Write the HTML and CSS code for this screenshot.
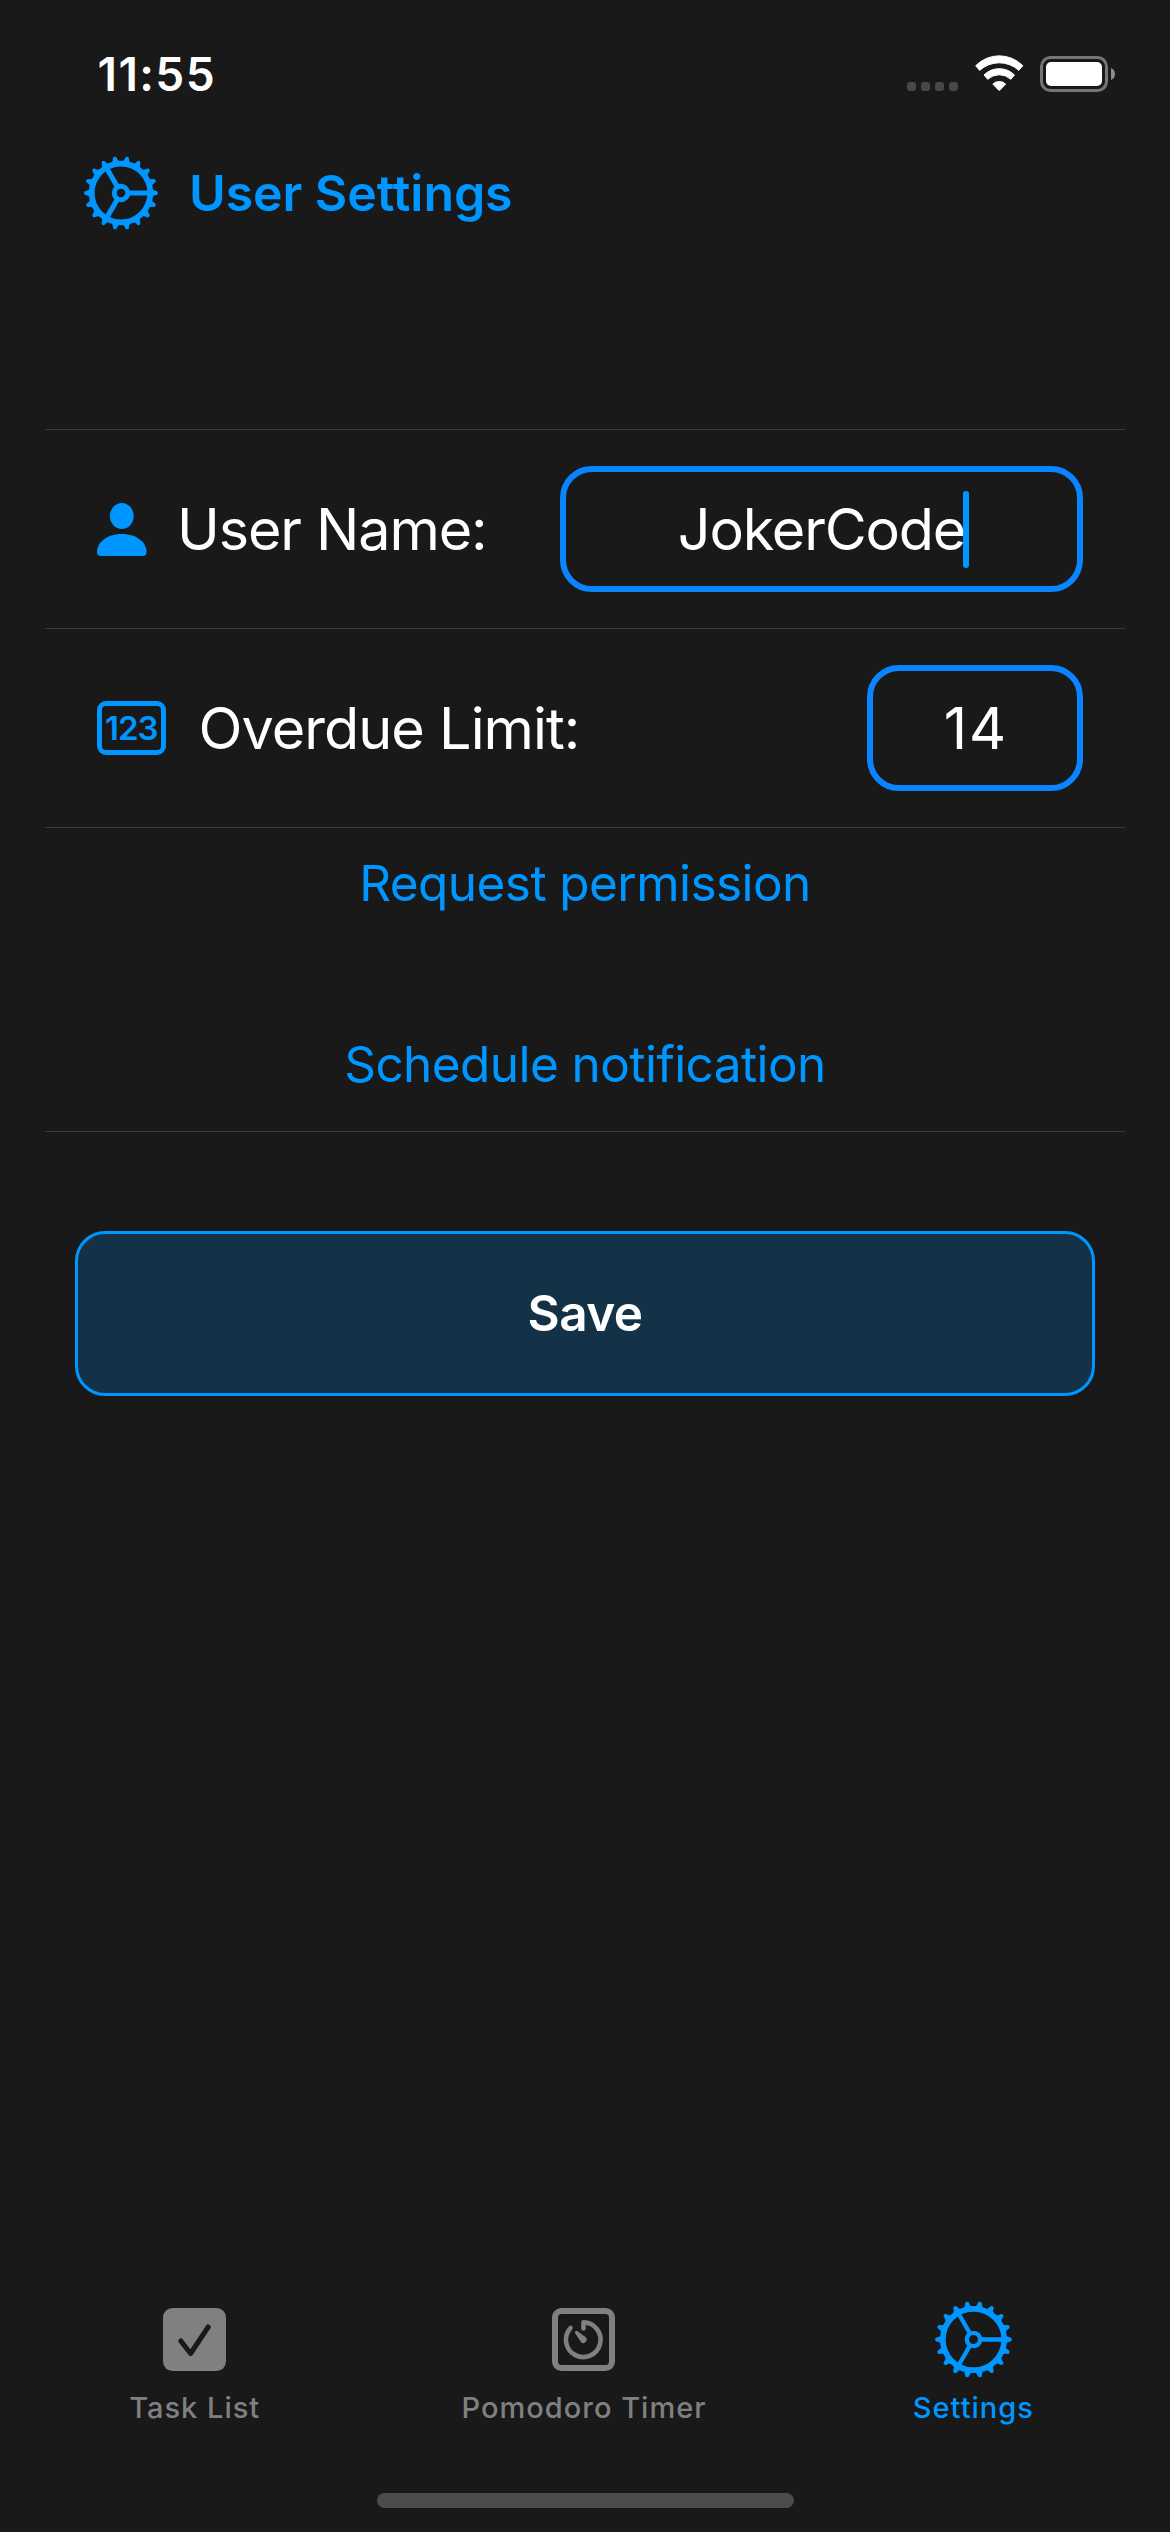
FILE: index.html
```
<!DOCTYPE html>
<html lang="en">
<head>
<meta charset="utf-8">
<title>User Settings</title>
<link rel="stylesheet" href="styles.css">
</head>
<body>
<svg class="defs" aria-hidden="true">
  <defs>
    <path id="tooth" d="M-14 -94 L-11 -99 C-8 -102 -7 -106 -6 -110 C-5 -116 5 -116 6 -110 C7 -106 8 -102 11 -99 L14 -94 Z"/>
    <g id="teeth3"><use href="#tooth" transform="rotate(10)"/><use href="#tooth" transform="rotate(30)"/><use href="#tooth" transform="rotate(50)"/></g>
    <g id="teeth">
      <use href="#teeth3"/>
      <use href="#teeth3" transform="rotate(60)"/>
      <use href="#teeth3" transform="rotate(120)"/>
      <use href="#teeth3" transform="rotate(180)"/>
      <use href="#teeth3" transform="rotate(240)"/>
      <use href="#teeth3" transform="rotate(300)"/>
    </g>
  </defs>
</svg>
<div class="screen">
  <header class="status">
    <span class="time">11:55</span>
    <div class="indicators">
      <div class="signal"><i></i><i></i><i></i><i></i></div>
      <svg class="wifi" viewBox="0 0 49 37" fill="#fff" stroke="#fff" stroke-width="1" stroke-linejoin="round">
        <path d="M.7 10.7A33 33 0 0 1 47.8 10.7L43.8 15.4A29 29 0 0 0 4.7 15.4Z"/>
        <path d="M9 20A21.5 21.5 0 0 1 39.5 20L35.8 24.3A17 17 0 0 0 12.7 24.3Z"/>
        <path d="M17.8 29A9.6 9.6 0 0 1 30.7 29L24.7 35.2Q24.2 35.6 23.7 35.2Z"/>
      </svg>
      <svg class="battery" viewBox="0 0 76 37">
        <rect x="1.5" y="1.5" width="65" height="33" rx="9" fill="none" stroke="#757575" stroke-width="3"/>
        <rect x="6" y="6" width="56" height="24" rx="5" fill="#fff"/>
        <path d="M71 12Q75 13.500 75 18T71 24Z" fill="#8c8c8c"/>
      </svg>
    </div>
  </header>

  <div class="title">
    <svg class="title-gear" viewBox="-115 -115 230 230">
      <use href="#teeth" fill="#0096ff"/>
      <g fill="none" stroke="#0096ff">
        <circle r="91" stroke-width="18"/>
        <circle r="21" stroke-width="15"/>
        <path d="M25 0H88M-12.500 -21.700L-44 -76.200M-12.500 21.700L-44 76.200" stroke-width="16"/>
      </g>
    </svg>
    <h1>User Settings</h1>
  </div>

  <main>
    <section class="row">
      <svg class="person" viewBox="0 0 50 53" fill="#0096ff">
        <ellipse cx="24.800" cy="13" rx="11.900" ry="13"/>
        <path d="M4 53Q0 53 0 49C0 40 9 31 24.800 31S49.600 40 49.600 49Q49.600 53 45.600 53Z"/>
      </svg>
      <label class="name-label">User Name:</label>
      <div class="field name-field"><span class="name-value">JokerCode</span><i class="caret"></i></div>
    </section>
    <section class="row">
      <div class="number-icon"><span>123</span></div>
      <label class="limit-label">Overdue Limit:</label>
      <div class="field limit-field"><span class="limit-value">14</span></div>
    </section>
    <section class="links">
      <a>Request permission</a>
      <a>Schedule notification</a>
    </section>
    <button class="save">Save</button>
  </main>

  <nav class="tabs">
    <div class="tab">
      <svg viewBox="0 0 63 63">
        <rect width="63" height="63" rx="9.500" fill="#808080"/>
        <path d="M17.800 33L27.600 45.500L45.200 19" fill="none" stroke="#191919" stroke-width="5" stroke-linecap="round" stroke-linejoin="round"/>
      </svg>
      <span>Task List</span>
    </div>
    <div class="tab">
      <svg viewBox="0 0 63 63" fill="none" stroke="#808080">
        <rect x="3" y="3" width="57" height="57" rx="6.500" stroke-width="6"/>
        <path d="M18.500 20A17.300 17.300 0 1 0 31.500 14.400V20.500" stroke-width="4.600" stroke-linecap="round" stroke-linejoin="round"/>
        <path d="M23.300 23.200Q24.300 22.300 25.600 23.300L33.800 29.200A3.500 3.500 0 0 1 29.200 34.400L23.200 25.200Q22.400 24 23.300 23.200Z" fill="#808080" stroke="none"/>
      </svg>
      <span>Pomodoro Timer</span>
    </div>
    <div class="tab active">
      <svg class="tab-gear" viewBox="-115 -115 230 230">
        <use href="#teeth" fill="#0096ff"/>
        <g fill="none" stroke="#0096ff">
          <circle r="91.500" stroke-width="17"/>
          <circle r="20" stroke-width="13"/>
          <path d="M25 0H88M-12.500 -21.700L-44 -76.200M-12.500 21.700L-44 76.200" stroke-width="13"/>
        </g>
      </svg>
      <span>Settings</span>
    </div>
  </nav>
  <div class="home-bar"></div>
</div>
</body>
</html>
```
FILE: styles.css
```
* { box-sizing: border-box; }
body {
  margin: 0;
  background: #191919;
  color: #fff;
  font-family: "Inter", "Liberation Sans", sans-serif;
}
svg { display: block; flex: none; }
.defs { width: 0; height: 0; position: absolute; }
.screen {
  width: 1170px;
  height: 2532px;
  display: flex;
  flex-direction: column;
  overflow: hidden;
}

/* Status bar */
.status {
  height: 149px;
  display: flex;
  justify-content: space-between;
  padding: 0 54px 0 97.600px;
}
.time {
  font-size: 46px;
  font-weight: 600;
  line-height: 149px;
  letter-spacing: 1.400px;
}
.indicators { display: flex; align-items: flex-start; padding-top: 55px; }
.signal { display: flex; gap: 5px; margin: 27px 17px 0 0; }
.signal i { width: 9px; height: 9px; border-radius: 3px; background: #484848; }
.wifi { width: 49px; height: 37px; margin-right: 16px; }
.battery { width: 76px; height: 37px; margin-top: 1px; }

/* Screen title */
.title {
  height: 88px;
  display: flex;
  align-items: center;
  padding-left: 84px;
  color: #0096ff;
}
.title-gear { width: 74px; height: 74px; }
h1 {
  margin: 0 0 0 31px;
  font-size: 50px;
  font-weight: 600;
  line-height: 88px;
  letter-spacing: -.08px;
}

/* Settings form */
main {
  flex: 1;
  margin: 192px 45px 0;
  border-top: 1px solid #3a3a3a;
}
.row {
  display: flex;
  align-items: center;
  height: 199px;
  padding: 0 42px 0 52px;
  border-bottom: 1px solid #3a3a3a;
}
.row label { flex: 1; font-size: 57.500px; line-height: 70px; white-space: nowrap; }
.person { width: 50px; height: 53px; }
.row .name-label { margin-left: 30px; letter-spacing: -1.100px; }
.row .limit-label { margin-left: 32.400px; letter-spacing: -.95px; }
.number-icon {
  width: 69px;
  height: 54px;
  border: 5px solid #0096ff;
  border-radius: 9px;
  color: #0096ff;
  font-size: 33px;
  font-weight: 600;
  line-height: 44px;
  letter-spacing: -1px;
  padding-left: 3px;
}
.field {
  position: relative;
  display: flex;
  align-items: center;
  justify-content: center;
  height: 126px;
  border: 6px solid #0a84ff;
  border-radius: 32px;
  font-size: 57.500px;
  line-height: 70px;
}
.name-field { width: 523px; }
.limit-field { width: 216px; }
.name-value { letter-spacing: -1.170px; }
.limit-value { letter-spacing: 2px; padding-left: 2px; }
.caret {
  position: absolute;
  left: 397px;
  top: 19px;
  width: 6px;
  height: 77px;
  border-radius: 3px;
  background: #0096ff;
}
.links {
  height: 304px;
  border-bottom: 1px solid #3a3a3a;
  padding-top: 20px;
  display: flex;
  flex-direction: column;
  align-items: center;
  gap: 110.500px;
  color: #0096ff;
  font-size: 49.500px;
}
.links a { line-height: 70px; letter-spacing: -.575px; }
.save {
  display: block;
  width: 1020px;
  height: 165px;
  margin: 99px 0 0 30px;
  padding: 0;
  border: 3px solid #0096ff;
  border-radius: 30px;
  background: #133247;
  color: #fff;
  font: 600 49.500px/1 "Inter", "Liberation Sans", sans-serif;
  letter-spacing: -.6px;
}

/* Tab bar */
.tabs {
  display: flex;
  height: 193px;
  padding: 0 2px 0 0;
  color: #808080;
}
.tab {
  flex: 1 0 0;
  display: flex;
  flex-direction: column;
  align-items: center;
  padding-top: 8px;
}
.tab svg { width: 63px; height: 63px; }
.tab .tab-gear { width: 77px; height: 77px; margin: -7px 0; }
.tab span {
  margin-top: 17px;
  font-size: 29px;
  font-weight: 500;
  line-height: 40px;
  letter-spacing: 1px;
}
.active { color: #0096ff; }
.home-bar {
  width: 417px;
  height: 15px;
  margin: 0 0 24px 377px;
  border-radius: 8px;
  background: #4c4c4c;
}
```
